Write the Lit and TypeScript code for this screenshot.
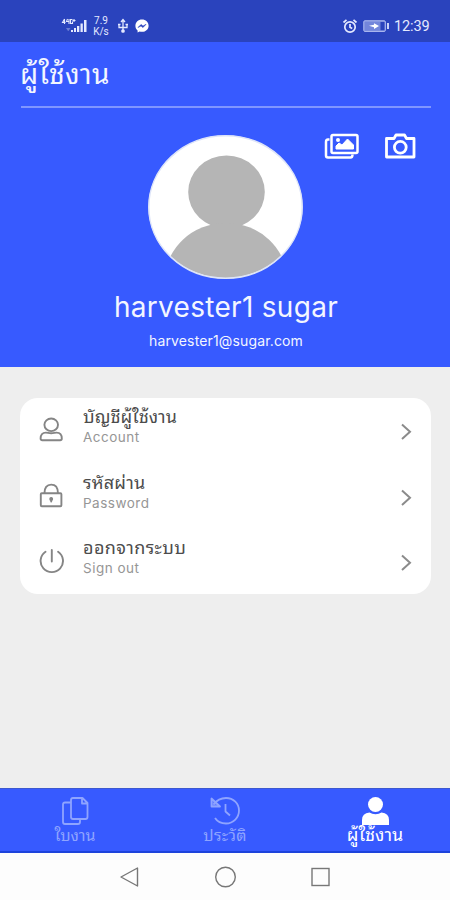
import { LitElement, html, css, svg } from "lit";
import { customElement } from "lit/decorators.js";

const icons = {
  account: svg`<ellipse cx="13.200" cy="7.800" rx="6.800" ry="6.300"/><path d="M2.600 21.600c0-3.800 2-6 5.200-6 1.800 0 3 .7 5.400.7s3.600-.7 5.400-.7c3.200 0 5.200 2.200 5.200 6 0 1.200-.6 1.700-1.700 1.700H4.300c-1.100 0-1.700-.5-1.700-1.700z"/>`,
  password: svg`<rect x="2.800" y="10.200" width="20.600" height="13" rx="1"/><path d="M6.500 10C6.500 5 8.700 1.600 13.200 1.600S19.900 5 19.900 10"/><circle cx="13.200" cy="16" r="1" fill="currentColor"/><path d="M13.200 15.500v3"/>`,
  signout: svg`<path d="M13.800 2v11.500M7.500 3.700a11.200 11.200 0 1 0 12.600 0"/>`,
};

const rows = [
  { icon: icons.account, title: "บัญชีผู้ใช้งาน", sub: "Account", cls: "a" },
  { icon: icons.password, title: "รหัสผ่าน", sub: "Password", cls: "b" },
  { icon: icons.signout, title: "ออกจากระบบ", sub: "Sign out", cls: "c" },
];

@customElement("status-bar")
class StatusBar extends LitElement {
  static styles = css`
    :host { display: flex; align-items: flex-end; height: 42px; box-sizing: border-box; padding: 0 20px 7px 61px; background: #2a43bd; color: #e4e9ff; font-family: Roboto, sans-serif; }
    .signal { width: 27px; height: 18px; }
    .speed { width: 16px; margin-left: 5px; font-size: 10px; line-height: 11px; text-align: center; margin-bottom: -2px; }
    .usb { width: 12px; height: 16px; margin-left: 8px; margin-bottom: 1px; }
    .chat { width: 14px; height: 14px; margin-left: 6px; margin-bottom: 2px; }
    .alarm { width: 16px; height: 16px; margin-left: auto; margin-bottom: 1px; }
    .battery { width: 26px; height: 14px; margin-left: 5px; margin-bottom: 2px; }
    .time { font-size: 14.5px; line-height: 18px; margin-left: 5px; margin-bottom: -1px; width: 36px; white-space: nowrap; letter-spacing: -.1px; }
  `;
  render() {
    return html`
      <svg class="signal" viewBox="0 0 27 18" fill="currentColor">
        <path d="M3.500 2L1.500 5.500H4.500M3.500 2v5M6.500 2L5.500 4.500H8M8 2v5M11.500 2.500H9.500v4h2V4.500M13 2v3M11.500 3.500h3" fill="none" stroke="currentColor" stroke-width="1.100"/>
        <path d="M10 13h2v2h-2zM13 11h2v4h-2zM16 9h2.300v6H16zM19.500 6.500h2.300V15h-2.300zM23 3h2.500v12H23z"/>
        <path d="M5 11h4.500l-2 3H7z" opacity=".35"/>
      </svg>
      <div class="speed">7.9<br />K/s</div>
      <svg class="usb" viewBox="0 0 12 16" fill="none" stroke="currentColor" stroke-width="1.300">
        <path d="M6 2v12M2 6v3.500h8V6M4 4l2-2.500L8 4"/><circle cx="6" cy="13" r="1.200" fill="currentColor"/><path d="M1 6.500h2.500M8.500 6.500H11"/>
      </svg>
      <svg class="chat" viewBox="0 0 14 14">
        <path d="M7 .5C3.200.5.400 3.100.400 6.700c0 2 .8 3.600 2.200 4.700v2.100l2-1c.8.200 1.500.3 2.400.3 3.800 0 6.600-2.600 6.600-6.100S10.800.5 7 .5z" fill="#fff"/>
        <path d="M3 8.500l3-3 2 1.600 3-1.800-3 3.200-2-1.600z" fill="#2a43bd" stroke="#2a43bd" stroke-width=".6"/>
      </svg>
      <svg class="alarm" viewBox="0 0 16 16" fill="none" stroke="currentColor" stroke-width="1.700">
        <circle cx="8" cy="9" r="5.200"/><path d="M1.500 4.500l3-2.600M14.500 4.500l-3-2.600M8 6v3.200l2.200 1.200"/>
      </svg>
      <svg class="battery" viewBox="0 0 26 14">
        <rect x=".8" y="1.800" width="21.500" height="10.600" rx="1" fill="#7386db" stroke="#b4c0f2"/>
        <path d="M17.500 3h4v8.200h-4z" fill="#2a43bd"/>
        <path d="M6 6.700l5-.9V4.300l5 2.800-5 2.800V8.200z" fill="#fff"/><rect x="24" y="4" width="2" height="6" fill="#c8d1f8"/>
      </svg>
      <div class="time">12:39</div>`;
  }
}

@customElement("profile-header")
class ProfileHeader extends LitElement {
  static styles = css`
    :host { display: block; position: relative; height: 325px; box-sizing: border-box; padding: 0 19px 0 21px; background: #375aff; color: #f3f6ff; overflow: hidden; }
    .title { margin: 0; height: 64px; line-height: 64px; font-weight: 400; font-size: 28px; letter-spacing: .3px; text-indent: -1px; border-bottom: 2px solid #7f96ff; white-space: nowrap; }
    .actions { position: absolute; top: 88px; right: 32px; display: flex; gap: 23px; }
    .actions svg { width: 36px; height: 32px; }
    .avatar { display: block; width: 156px; height: 145px; margin: 27px auto 0 126px; }
    .name { margin: 8px 0 0; height: 38px; line-height: 38px; text-align: center; font-size: 28px; letter-spacing: .3px; white-space: nowrap; }
    .mail { height: 30px; line-height: 30px; text-align: center; font-size: 14px; letter-spacing: .15px; white-space: nowrap; }
  `;
  render() {
    return html`
      <h1 class="title">ผู้ใช้งาน</h1>
      <div class="actions">
        <svg viewBox="0 0 36 32" fill="none" stroke="#fff" stroke-width="2.500" stroke-linejoin="round">
          <rect x="8.500" y="5" width="26" height="18" rx="1.500"/><path d="M6.500 9.500H5Q3 9.500 3 12V25.500q0 2 2 2h22.500q2 0 2-3"/>
          <path d="M13 19v-3l3-3 3 2 5.500-6 6 6v4z" fill="#fff" stroke-width="1"/><circle cx="15" cy="10" r="2" fill="#fff" stroke="none"/>
        </svg>
        <svg viewBox="0 0 36 32" fill="none" stroke="#fff" stroke-width="2.800" stroke-linejoin="round">
          <path d="M4.500 8.500H12l2-3.500h8.500l2 3.500H32v18.500H4.500z"/><circle cx="18.300" cy="17.300" r="5.900"/>
        </svg>
      </div>
      <svg class="avatar" viewBox="0 0 156 145">
        <defs><clipPath id="face"><ellipse cx="78.500" cy="72" rx="76.500" ry="71"/></clipPath></defs>
        <ellipse cx="78.500" cy="72" rx="77" ry="71.500" fill="#fff"/>
        <g clip-path="url(#face)" fill="#b5b5b5"><ellipse cx="79.500" cy="57" rx="38.300" ry="36.500"/><ellipse cx="79" cy="145" rx="61" ry="57"/></g>
        <ellipse cx="78.500" cy="72" rx="76.700" ry="71.200" fill="none" stroke="#dde4f8" stroke-width="1.500"/>
      </svg>
      <div class="name">harvester1 sugar</div>
      <div class="mail">harvester1@sugar.com</div>`;
  }
}

@customElement("menu-card")
class MenuCard extends LitElement {
  static styles = css`
    :host { display: block; margin: 31px 19px 0 20px; height: 196px; background: #fff; border-radius: 18px; }
    .row { display: grid; grid-template-columns: 26px 1fr 14px; column-gap: 18px; height: 65.7px; padding: 0 18px; }
    .icon { width: 26px; height: 26px; margin-top: 19px; color: #858585; fill: none; stroke: currentColor; stroke-width: 1.9; stroke-linecap: round; }
    .text { padding: 7px 0 0 1px; white-space: nowrap; }
    .th { height: 24px; line-height: 23px; font-size: 18px; color: #4c4c4c; }
    .th.b { letter-spacing: .2px; }
    .th.c { letter-spacing: .4px; }
    .en { height: 17px; line-height: 16px; font-size: 13.5px; color: #969696; letter-spacing: .5px; }
    .chevron { width: 14px; height: 18px; margin-top: 25px; fill: none; stroke: #8b8b8b; stroke-width: 2; }
  `;
  render() {
    return rows.map((r) => html`
      <div class="row">
        <svg class="icon" viewBox="0 0 26 26">${r.icon}</svg>
        <div class="text"><div class="th ${r.cls}">${r.title}</div><div class="en">${r.sub}</div></div>
        <svg class="chevron" viewBox="0 0 14 18"><path d="M3 1.500l8 7.200-8 7.200"/></svg>
      </div>`);
  }
}

@customElement("tab-bar")
class TabBar extends LitElement {
  static styles = css`
    :host { display: grid; grid-template-columns: repeat(3, 1fr); height: 65px; box-sizing: border-box; background: #375aff; border-top: 1px solid #3c58cf; border-bottom: 2px solid #1d43dc; }
    .tab { display: flex; flex-direction: column; align-items: center; color: #8fa4ff; font-size: 16px; line-height: 22px; white-space: nowrap; }
    svg { width: 32px; height: 30px; margin-top: 7px; flex: none; fill: none; stroke: currentColor; stroke-width: 1.8; stroke-linejoin: round; }
    .label { margin-top: -2px; }
    .l2 { letter-spacing: .2px; }
    .l3 { font-size: 18px; letter-spacing: 0; }
    .active { color: #fff; }
    .active svg { fill: #fff; stroke: none; }
  `;
  render() {
    return html`
      <div class="tab"><svg viewBox="0 0 32 30"><path d="M14 2h9.500l5 5v14q0 2-2 2H14q-2 0-2-2V4q0-2 2-2zM23 2v5.500h5.500M11.500 6.500H6q-2 0-2 2V26q0 2 2 2h13q2 0 2-2v-3"/></svg><span class="label l1">ใบงาน</span></div>
      <div class="tab"><svg viewBox="0 0 32 30"><path d="M4.500 8.500C7.500 4.500 11.500 2 17 2c7.500 0 13 5.500 13 12.500S24.500 27.500 17 27.500c-4.500 0-8.500-1.700-11-5.500M16.500 8v7.500l4.500 4"/><path d="M2.500 2.500v8h8.500z" fill="currentColor" fill-opacity=".5"/></svg><span class="label l2">ประวัติ</span></div>
      <div class="tab active"><svg viewBox="0 0 32 30"><circle cx="16.500" cy="8.500" r="7.500"/><path d="M3 29V24q0-7 7.500-7.500 2.500 1.700 6 1.700t6-1.700q7.500.500 7.500 7.500v5z"/></svg><span class="label l3">ผู้ใช้งาน</span></div>`;
  }
}

@customElement("system-nav")
class SystemNav extends LitElement {
  static styles = css`
    :host { display: flex; justify-content: center; align-items: center; gap: 71px; height: 47px; background: #fdfdfd; }
    svg { width: 24px; height: 24px; fill: none; stroke: #777; stroke-width: 1.4; }
  `;
  render() {
    return html`
      <svg viewBox="0 0 24 24"><path d="M19.500 3v18L3 12z" stroke-linejoin="round"/></svg>
      <svg viewBox="0 0 24 24"><circle cx="12.500" cy="12" r="9.800"/></svg>
      <svg viewBox="0 0 24 24"><rect x="4" y="3.500" width="17" height="17"/></svg>`;
  }
}

@customElement("app-root")
class AppRoot extends LitElement {
  static styles = css`
    :host { display: flex; flex-direction: column; height: 900px; background: #eee; font-family: Inter, "Noto Sans Thai Looped", "Noto Looped Thai", Loma, "Noto Sans Thai", "Noto Sans", sans-serif; overflow: hidden; }
    .body { flex: 1; display: flow-root; }
  `;
  render() {
    return html`<status-bar></status-bar><profile-header></profile-header><div class="body"><menu-card></menu-card></div><tab-bar></tab-bar><system-nav></system-nav>`;
  }
}
